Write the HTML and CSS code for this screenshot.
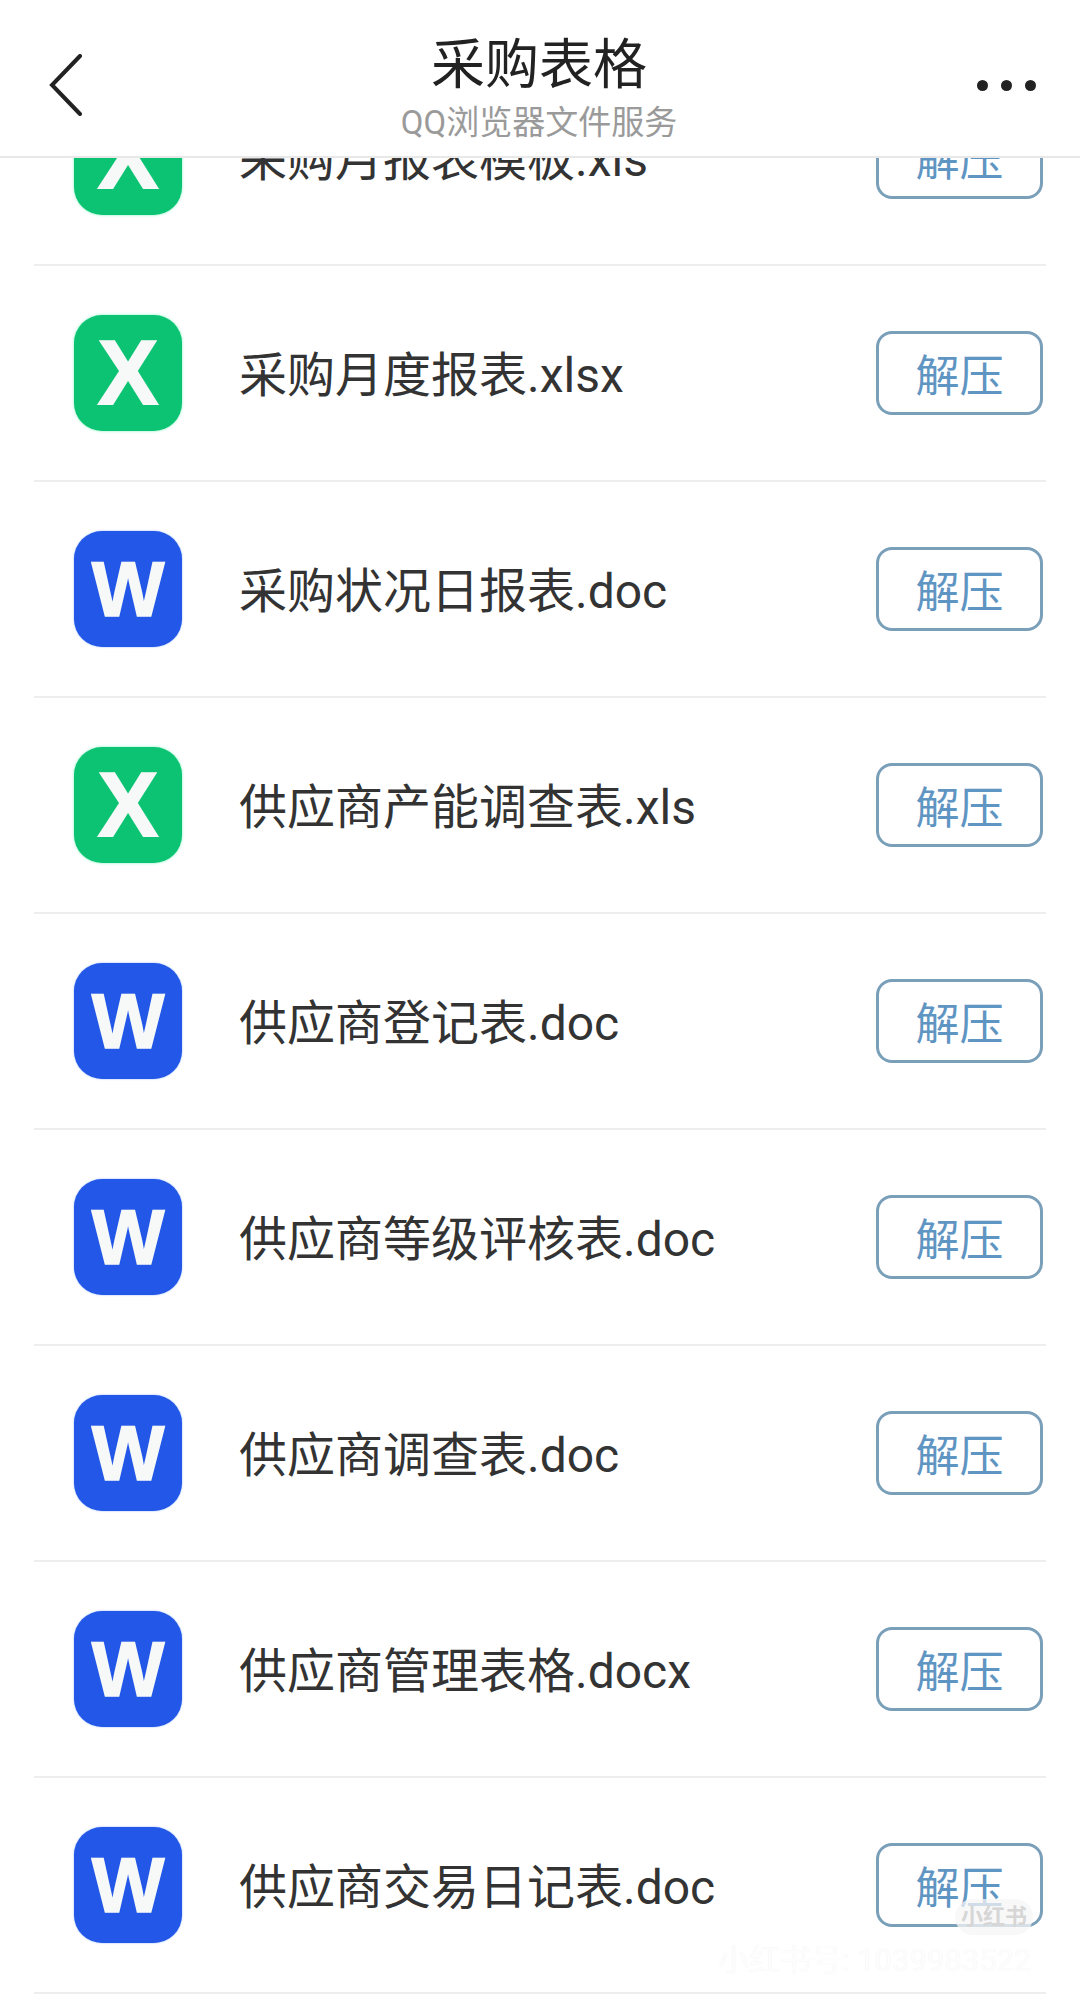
FILE: index.html
```html
<!DOCTYPE html>
<html lang="zh-CN">
<head>
<meta charset="utf-8">
<title>采购表格</title>
<link rel="stylesheet" href="styles.css">
</head>
<body>
<div class="page">
  <header class="topbar">
    <svg class="back" width="34" height="62" viewBox="0 0 34 62"><polyline points="31,2 3,31 31,60"/></svg>
    <div class="heading">
      <div class="title">采购表格</div>
      <div class="subtitle">QQ浏览器文件服务</div>
    </div>
    <div class="more"><i></i><i></i><i></i></div>
  </header>
  <main class="viewport">
    <ul class="list">
      <li class="row"><span class="icon xls">X</span><span class="name">采购月报表模板.xls</span><button class="unzip">解压</button></li>
      <li class="row"><span class="icon xls">X</span><span class="name">采购月度报表.xlsx</span><button class="unzip">解压</button></li>
      <li class="row"><span class="icon doc">W</span><span class="name">采购状况日报表.doc</span><button class="unzip">解压</button></li>
      <li class="row"><span class="icon xls">X</span><span class="name">供应商产能调查表.xls</span><button class="unzip">解压</button></li>
      <li class="row"><span class="icon doc">W</span><span class="name">供应商登记表.doc</span><button class="unzip">解压</button></li>
      <li class="row"><span class="icon doc">W</span><span class="name">供应商等级评核表.doc</span><button class="unzip">解压</button></li>
      <li class="row"><span class="icon doc">W</span><span class="name">供应商调查表.doc</span><button class="unzip">解压</button></li>
      <li class="row"><span class="icon doc">W</span><span class="name">供应商管理表格.docx</span><button class="unzip">解压</button></li>
      <li class="row"><span class="icon doc">W</span><span class="name">供应商交易日记表.doc</span><button class="unzip">解压</button></li>
    </ul>
  </main>
  <div class="mark-badge">小红书</div>
  <div class="mark-id">小红书号: 1039983522</div>
</div>
</body>
</html>
```
FILE: styles.css
```css
* { box-sizing: border-box; }
html, body { margin: 0; padding: 0; background: #fff; }
body { font-family: Roboto, "Noto Sans CJK SC", sans-serif; }
.page { position: relative; width: 1080px; height: 2010px; overflow: hidden; display: flex; flex-direction: column; }

.topbar {
  position: relative; z-index: 2; flex: none; height: 158px; background: #fff;
  border-bottom: 2px solid #e8e8e8;
  display: grid; grid-template-columns: 1fr auto 1fr; align-items: start;
  padding: 0 44px 0 49px;
}
.back { margin-top: 54px; fill: none; stroke: #222; stroke-width: 4; stroke-linecap: round; stroke-linejoin: miter; }
.heading { display: flex; flex-direction: column; align-items: center; padding-top: 33px; margin-left: -7px; }
.title { font-size: 54px; line-height: 66px; color: #222; }
.subtitle { font-size: 33px; line-height: 44px; margin-top: 2px; color: #9a9a9a; }
.more { justify-self: end; display: flex; gap: 13px; margin-top: 80px; }
.more i { width: 11px; height: 11px; border-radius: 50%; background: #222; }

.viewport { flex: 1; overflow: hidden; }
.list { list-style: none; margin: -108px 0 0; padding: 0 34px; }
.row {
  height: 216px; display: flex; align-items: center;
  border-bottom: 2px solid #eeeeee; padding: 0 3px 0 40px;
}
.icon {
  flex: none; width: 108px; height: 116px; border-radius: 28px;
  display: flex; align-items: center; justify-content: center;
  font-family: "Liberation Sans", sans-serif; font-weight: 700; color: #f6f9f8;
}
.icon.xls { background: #0cc373; font-size: 90px; -webkit-text-stroke: 2px #f6f9f8; box-shadow: 0 0 3px #7ff0c0; }
.icon.doc { background: #2257e7; font-size: 77px; -webkit-text-stroke: 1.5px #f6f9f8; box-shadow: 0 0 2px #8fb0f5; }
.name { flex: 1; margin-left: 57px; padding-top: 6px; font-size: 48px; line-height: 64px; color: #333; }
.unzip {
  flex: none; width: 167px; height: 84px; padding: 0; background: #fff;
  border: 3px solid #7a9fb8; border-radius: 16px;
  font-family: inherit; font-size: 44px; color: #5f95c2;
}

.mark-badge {
  position: absolute; left: 955px; top: 1899px; width: 78px; height: 36px; border-radius: 18px;
  background: rgba(245,245,245,.75); color: #d6d6d6; font-size: 22px; font-weight: 700;
  line-height: 36px; text-align: center; z-index: 3;
}
.mark-id {
  position: absolute; left: 718px; top: 1941px; z-index: 3; white-space: nowrap;
  font-size: 31px; line-height: 40px; color: #fdfdfd;
  text-shadow: 0 0 1px #eeeeee;
}
```
